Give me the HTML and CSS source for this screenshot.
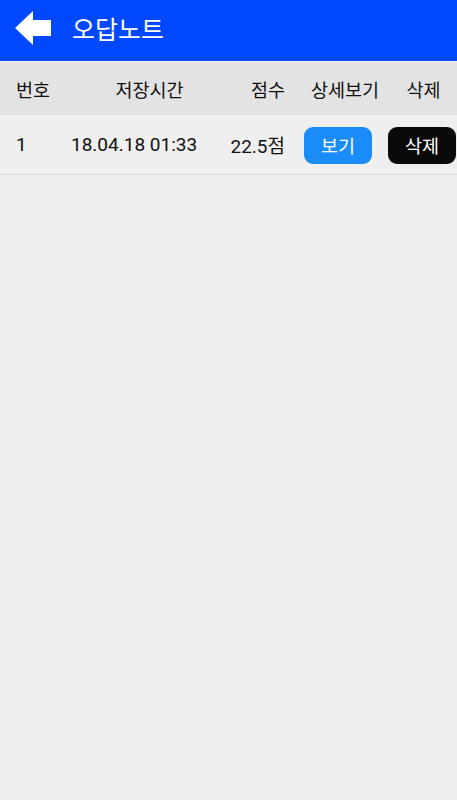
FILE: index.html
```html
<!DOCTYPE html>
<html lang="ko">
<head>
<meta charset="utf-8">
<link rel="stylesheet" href="styles.css">
</head>
<body>
<div class="app">
  <header class="topbar">
    <svg class="back" width="36" height="34" viewBox="0 0 36 34"><polygon points="0,17 18,0 18,9 36,9 36,25 18,25 18,34" fill="#fff"/></svg>
    <h1 class="title">오답노트</h1>
  </header>
  <div class="table">
    <div class="row head">
      <div class="c1">번호</div>
      <div class="c2">저장시간</div>
      <div class="c3">점수</div>
      <div class="c4">상세보기</div>
      <div class="c5">삭제</div>
    </div>
    <div class="row data">
      <div class="c1">1</div>
      <div class="c2">18.04.18 01:33</div>
      <div class="c3">22.5점</div>
      <div class="c4"><button class="btn view">보기</button></div>
      <div class="c5"><button class="btn del">삭제</button></div>
    </div>
  </div>
</div>
</body>
</html>
```
FILE: styles.css
```css
* { box-sizing: border-box; }
html, body { margin: 0; padding: 0; }
body {
  background: #eeeeee;
  font-family: Roboto, "Noto Sans CJK KR", sans-serif;
  color: #111;
  width: 457px;
  height: 800px;
  overflow: hidden;
}
.topbar {
  height: 61px;
  background: #0048ff;
  display: flex;
  align-items: center;
  padding-left: 15px;
  gap: 21px;
}
.back { display: block; margin-top: -5px; }
.title {
  margin: 0;
  color: #fff;
  font-family: "Noto Sans CJK KR", sans-serif;
  font-weight: 400;
  font-size: 25px;
  margin-top: -6px;
}
.table { border-top: 1px solid #f4f4f4; }
.row {
  display: grid;
  grid-template-columns: 70px 159px 66px 90px 72px;
  align-items: center;
}
.row > div { white-space: nowrap; }
.head {
  height: 53px;
  background: #e3e3e3;
  font-family: "Noto Sans CJK KR", sans-serif;
  font-size: 18.5px;
}
.data {
  height: 60px;
  background: #efefef;
  border-bottom: 1px solid #dedede;
  font-size: 19px;
}
.c1 { padding-left: 16px; }
.head .c2 { text-align: center; }
.data .c2 { text-align: left; padding-left: 1px; }
.c3 { text-align: right; padding-right: 10px; }
.head .c4 { text-align: center; padding-left: 10px; }
.head .c5 { text-align: center; padding-left: 5px; }
.data .c4 { padding-left: 9px; }
.data .c5 { padding-left: 3px; }
.btn {
  display: block;
  width: 68px;
  height: 37px;
  border: none;
  border-radius: 9px;
  color: #fff;
  font-family: "Noto Sans CJK KR", sans-serif;
  font-size: 18.5px;
  padding: 0;
  margin-top: 1px;
}
.view { background: #1a8cf7; }
.del { background: #0a0a0a; }
```
